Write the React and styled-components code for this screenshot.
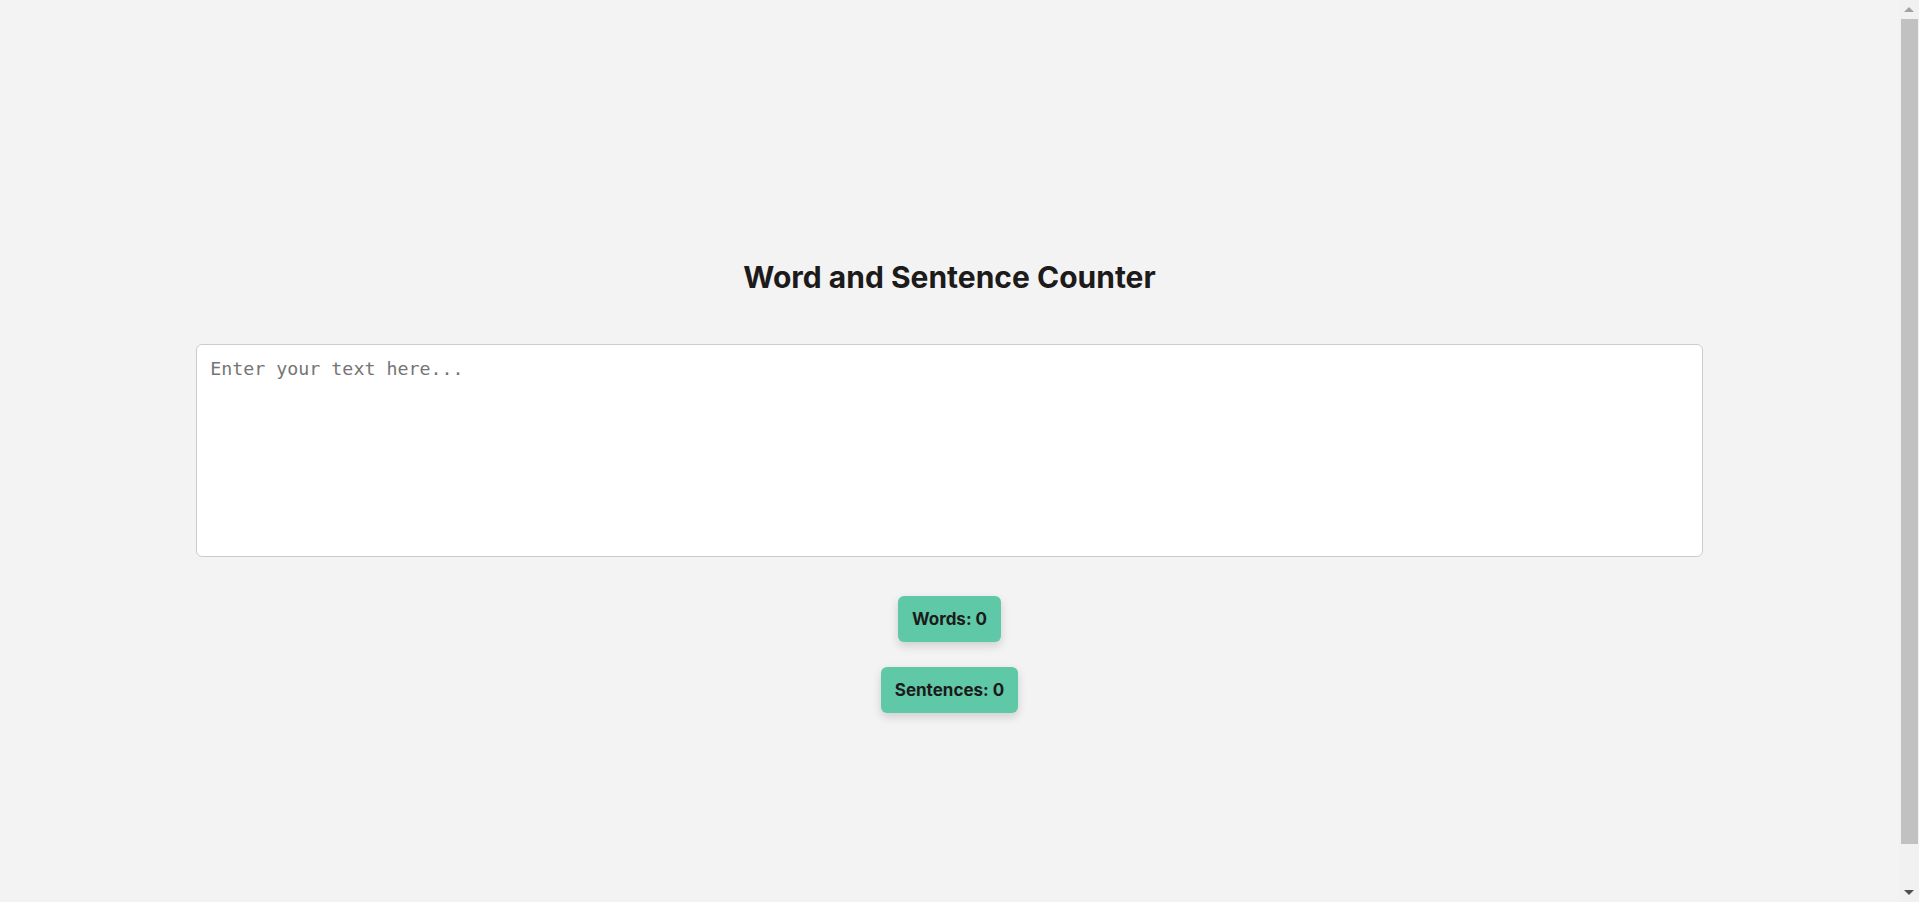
import React, { useState } from 'react';
import styled, { createGlobalStyle } from 'styled-components';

const GlobalStyle = createGlobalStyle`
  html, body {
    background: #f3f3f3;
  }
  body {
    margin: 8px 28px 8px 8px;
    font-family: Inter, 'Noto Sans', sans-serif;
    color: #1c1c1c;
  }
`;

const Page = styled.div`
  min-height: calc(100vh - 16px);
  box-sizing: border-box;
  padding-top: 251px;
  display: flex;
  flex-direction: column;
  align-items: center;
`;

const Title = styled.h1`
  margin: 0 0 49px;
  font-size: 30px;
  line-height: 36px;
  font-weight: 700;
  color: #1c1a1a;
`;

const TextInput = styled.textarea`
  width: 80%;
  height: 213px;
  box-sizing: border-box;
  padding: 12px 13px;
  border: 1px solid #cccccc;
  border-radius: 6px;
  background: #fff;
  font-family: 'DejaVu Sans Mono', monospace;
  font-size: 18.3px;
  line-height: 1.3;
  color: #222;
  resize: none;
  outline: none;

  &::placeholder {
    color: #757575;
  }
`;

const Stats = styled.div`
  margin-top: 39px;
  display: flex;
  flex-direction: column;
  align-items: center;
  gap: 25px;
`;

const Stat = styled.div`
  background: #5fc8a6;
  color: #1c1a1a;
  font-size: 17px;
  font-weight: 700;
  line-height: 22px;
  padding: 12px 14px;
  border-radius: 6px;
  box-shadow: 0 4px 10px rgba(0, 0, 0, 0.15);
`;

/* window scrollbar seen in the screenshot */
const ScrollTrack = styled.div`
  position: fixed;
  top: 0;
  right: 0;
  bottom: 0;
  width: 20px;
  background: #f1f1f1;
  display: flex;
  flex-direction: column;
  align-items: center;
`;

const Arrow = styled.div`
  flex: none;
  height: 19px;
  width: 100%;
  display: flex;
  align-items: center;
  justify-content: center;

  &::before {
    content: '';
    border-left: 5px solid transparent;
    border-right: 5px solid transparent;
    ${(p) =>
      p.$down
        ? `border-top: 5px solid ${p.$color};`
        : `border-bottom: 5px solid ${p.$color};`}
  }
`;

const Thumb = styled.div`
  flex: 1;
  width: 17px;
  margin-left: 2px;
  margin-right: 1px;
  margin-bottom: 39px;
  background: #c1c1c1;
`;

const countWords = (t) => (t.trim() ? t.trim().split(/\s+/).length : 0);
const countSentences = (t) => t.split(/[.!?]+/).filter((s) => s.trim()).length;

export default function App() {
  const [text, setText] = useState('');

  return (
    <>
      <GlobalStyle />
      <Page>
        <Title>Word and Sentence Counter</Title>
        <TextInput
          value={text}
          onChange={(e) => setText(e.target.value)}
          placeholder="Enter your text here..."
        />
        <Stats>
          <Stat>Words: {countWords(text)}</Stat>
          <Stat>Sentences: {countSentences(text)}</Stat>
        </Stats>
      </Page>
      <ScrollTrack>
        <Arrow $color="#a3a3a3" />
        <Thumb />
        <Arrow $down $color="#505050" />
      </ScrollTrack>
    </>
  );
}
